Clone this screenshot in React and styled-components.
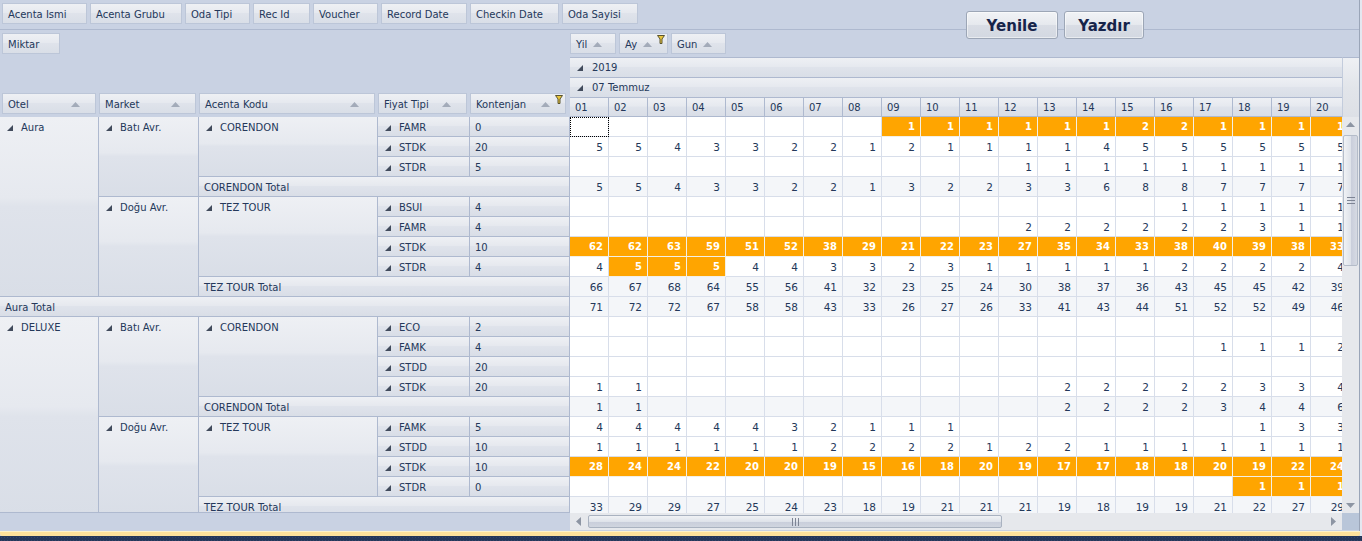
import React from 'react';
import styled, { createGlobalStyle } from 'styled-components';

const GlobalStyle = createGlobalStyle`
  html, body {
    margin: 0;
    padding: 0;
    background: #c9d2e3;
    overflow: hidden;
  }
  * {
    box-sizing: border-box;
  }
`;

const barGradient = 'linear-gradient(to bottom, #eef0f4 0%, #e6e9ef 45%, #dfe3eb 50%, #d9dee7 100%)';
const lineColor = '#aeb9cf';
const textColor = '#24385a';

const Page = styled.div`
  position: relative;
  width: 1362px;
  height: 541px;
  overflow: hidden;
  display: flex;
  flex-direction: column;
  background: #c9d2e3;
  font-family: "DejaVu Sans", "Noto Sans", sans-serif;
  font-size: 10px;
  color: ${textColor};
`;

const Frame = styled.div`
  width: 1360px;
  height: 531px;
  flex: none;
  display: flex;
  flex-direction: column;
  border-right: 1px solid #9aa5b8;
`;

const FilterBar = styled.div`
  height: 30px;
  flex: none;
  display: flex;
  gap: 3px;
  padding: 3px 0 0 2px;
  border-bottom: 1px solid ${lineColor};
`;

const Field = styled.div`
  position: relative;
  width: ${p => p.$w}px;
  height: 21px;
  flex: none;
  display: flex;
  align-items: center;
  gap: 6px;
  padding: 1px ${p => p.$right || 5}px 0 5px;
  white-space: nowrap;
  border: 1px solid #bcc6d8;
  background: ${barGradient};
`;

const FieldGap = styled.div`
  flex: 1;
`;

const Funnel = styled.svg`
  position: absolute;
  top: 1px;
  right: 2px;
  width: 8px;
  height: 9px;
`;

const HeaderArea = styled.div`
  height: 87px;
  flex: none;
  display: flex;
`;

const LeftHeader = styled.div`
  width: 570px;
  flex: none;
  display: flex;
  flex-direction: column;
  justify-content: space-between;
  padding: 3px 0 3px 2px;
`;

const FieldRow = styled.div`
  display: flex;
  gap: 3px;
`;

const RightHeader = styled.div`
  flex: 1;
  min-width: 0;
  display: flex;
  flex-direction: column;
`;

const ColFields = styled.div`
  height: 27px;
  flex: none;
  display: flex;
  gap: 3px;
  padding-top: 3px;
`;

const Band = styled.div`
  height: 20px;
  flex: none;
  display: flex;
  align-items: center;
  gap: 9px;
  padding: 0 0 0 7px;
  border-top: 1px solid ${lineColor};
  background: ${barGradient};
`;

const Days = styled.div`
  height: 20px;
  flex: none;
  display: flex;
  overflow: hidden;
  border-top: 1px solid ${lineColor};
  border-bottom: 1px solid ${lineColor};
`;

const Day = styled.div`
  width: 39px;
  flex: none;
  display: flex;
  align-items: center;
  padding: 1px 0 0 5px;
  border-right: 1px solid ${lineColor};
  background: ${barGradient};
`;

const Corner = styled.div`
  position: absolute;
  left: 1342px;
  top: 57px;
  width: 17px;
  height: 60px;
  border-left: 1px solid #c3ccdc;
  border-top: 1px solid ${lineColor};
  background: linear-gradient(to bottom, #eef0f4 0%, #e2e5ea 50%, #dde0e6 100%);
`;

const Body = styled.div`
  height: 396px;
  flex: none;
  display: flex;
`;

const RowHeaders = styled.div`
  width: 570px;
  flex: none;
  height: 396px;
  overflow: hidden;
  border-bottom: 1px solid ${lineColor};
  display: grid;
  grid-template-columns: 99px 100px 179px 92px 100px;
  grid-auto-rows: 20px;
`;

const HeadCell = styled.div`
  grid-row: span ${p => p.$rows || 1};
  grid-column: span ${p => p.$cols || 1};
  display: flex;
  align-items: flex-start;
  gap: 8px;
  padding: 5px 0 0 ${p => p.$pad || 7}px;
  white-space: nowrap;
  border-right: 1px solid ${lineColor};
  border-bottom: 1px solid ${lineColor};
  background: ${barGradient};
`;

const DataPane = styled.div`
  width: 772px;
  flex: none;
  height: 396px;
  overflow: hidden;
  display: grid;
  grid-template-columns: repeat(20, 39px);
  grid-auto-rows: 20px;
`;

const Cell = styled.div`
  display: flex;
  align-items: center;
  justify-content: flex-end;
  padding-right: 5px;
  border-right: 1px solid #d8deea;
  border-bottom: 1px solid #d8deea;
  font-size: ${p => (p.$hot ? 10 : 10.5)}px;
  font-weight: ${p => (p.$hot ? 700 : 400)};
  color: ${p => (p.$hot ? '#ffffff' : textColor)};
  background: ${p => (p.$hot ? '#ffa500' : p.$total ? '#f4f6f9' : '#ffffff')};
  border-right-color: ${p => (p.$hot ? '#f3f0e6' : '#d8deea')};
  border-bottom-color: ${p => (p.$hot ? '#f3f0e6' : '#d8deea')};
  outline: ${p => (p.$focus ? '1px dotted #000000' : 'none')};
  outline-offset: -1px;
`;

const VScroll = styled.div`
  width: 17px;
  flex: none;
  position: relative;
  background: #e6e8ec;
`;

const VThumb = styled.div`
  position: absolute;
  top: 18px;
  left: 1px;
  width: 15px;
  height: 131px;
  display: flex;
  align-items: center;
  justify-content: center;
  border: 1px solid #b4bcc9;
  border-radius: 2px;
  background: linear-gradient(to right, #f0f2f5 0%, #dfe3ea 50%, #c9cedb 55%, #d6dae3 100%);
`;

const Bottom = styled.div`
  height: 17px;
  flex: none;
  display: flex;
`;

const BottomLeft = styled.div`
  width: 570px;
  flex: none;
`;

const HScroll = styled.div`
  width: 772px;
  flex: none;
  position: relative;
  background: #e6e8ec;
`;

const HThumb = styled.div`
  position: absolute;
  left: 18px;
  top: 2px;
  width: 414px;
  height: 13px;
  display: flex;
  align-items: center;
  justify-content: center;
  border: 1px solid #a9b2c0;
  border-radius: 2px;
  background: linear-gradient(to bottom, #f0f2f5 0%, #dfe3ea 50%, #c9cedb 55%, #d0d5df 100%);
`;

const ScrollCorner = styled.div`
  width: 17px;
  flex: none;
  background: #b9c6d9;
`;

const Arrow = styled.svg`
  position: absolute;
  ${p => p.$place};
  width: ${p => p.$w}px;
  height: ${p => p.$h}px;
`;

const Status = styled.div`
  width: 1360px;
  height: 5px;
  flex: none;
  border-top: 1px solid #fff3c9;
  border-radius: 0 0 2px 2px;
  background: #ffe29b;
`;

const Desktop = styled.div`
  flex: 1;
  background-color: #25375a;
  background-image: radial-gradient(#33466a 0.5px, transparent 0.6px);
  background-size: 3px 3px;
`;

const EdgeStrip = styled.div`
  position: absolute;
  top: 0;
  right: 0;
  width: 2px;
  height: 536px;
  background: #e4e8f0;
`;

const Actions = styled.div`
  position: absolute;
  left: 966px;
  top: 11px;
  display: flex;
  gap: 6px;
`;

const ActionButton = styled.button`
  width: ${p => p.$w}px;
  height: 28px;
  padding: 1px 0 0;
  font-family: "DejaVu Sans", Verdana, sans-serif;
  font-size: 15px;
  font-weight: 700;
  color: #16244a;
  border: 1px solid #9ca6b6;
  border-radius: 3px;
  background: linear-gradient(to bottom, #f1f3f6 0%, #e6e9ee 48%, #d9dde5 52%, #d3d8e1 100%);
  box-shadow: inset 0 0 0 1px rgba(255, 255, 255, 0.5);
`;

const Expander = () => (
  <svg width="6" height="6" viewBox="0 0 6 6" style={{ flex: 'none', marginTop: 3 }}>
    <polygon points="0,6 6,6 6,0" fill="#414b5c" />
  </svg>
);

const BandExpander = () => (
  <svg width="6" height="6" viewBox="0 0 6 6" style={{ flex: 'none' }}>
    <polygon points="0,6 6,6 6,0" fill="#414b5c" />
  </svg>
);

const SortUp = () => (
  <svg width="9" height="5" viewBox="0 0 9 5" style={{ flex: 'none' }}>
    <polygon points="4.5,0 9,5 0,5" fill="#a3abb9" />
  </svg>
);

const FilterMark = () => (
  <Funnel viewBox="0 0 8 9">
    <polygon points="0.5,0.5 7.5,0.5 5,4 5,8.5 3,8.5 3,4" fill="#e9c53c" stroke="#5a5430" strokeWidth="1" />
  </Funnel>
);

const Lines = () => (
  <svg width="8" height="7" viewBox="0 0 8 7">
    <path d="M0 .5H8M0 3.5H8M0 6.5H8" stroke="#7d8494" strokeWidth="1" />
  </svg>
);

const topFields = [
  ['Acenta Ismi', 85], ['Acenta Grubu', 92], ['Oda Tipi', 65], ['Rec Id', 57],
  ['Voucher', 65], ['Record Date', 86], ['Checkin Date', 89], ['Oda Sayisi', 76],
];

const rowFields = [
  { label: 'Otel', w: 94 }, { label: 'Market', w: 97 }, { label: 'Acenta Kodu', w: 176 },
  { label: 'Fiyat Tipi', w: 89 }, { label: 'Kontenjan', w: 96, filter: true },
];

const colFields = [
  { label: 'Yil', w: 46 }, { label: 'Ay', w: 49, filter: true }, { label: 'Gun', w: 55 },
];

const days = Array.from({ length: 20 }, (_, i) => String(i + 1).padStart(2, '0'));

const _ = null;
const rows = [
  { v: [_, _, _, _, _, _, _, _, 1, 1, 1, 1, 1, 1, 2, 2, 1, 1, 1, 1], hot: 'from8' },
  { v: [5, 5, 4, 3, 3, 2, 2, 1, 2, 1, 1, 1, 1, 4, 5, 5, 5, 5, 5, 5] },
  { v: [_, _, _, _, _, _, _, _, _, _, _, 1, 1, 1, 1, 1, 1, 1, 1, 1] },
  { v: [5, 5, 4, 3, 3, 2, 2, 1, 3, 2, 2, 3, 3, 6, 8, 8, 7, 7, 7, 7], total: true },
  { v: [_, _, _, _, _, _, _, _, _, _, _, _, _, _, _, 1, 1, 1, 1, 1] },
  { v: [_, _, _, _, _, _, _, _, _, _, _, 2, 2, 2, 2, 2, 2, 3, 1, 1] },
  { v: [62, 62, 63, 59, 51, 52, 38, 29, 21, 22, 23, 27, 35, 34, 33, 38, 40, 39, 38, 33], hot: 'all' },
  { v: [4, 5, 5, 5, 4, 4, 3, 3, 2, 3, 1, 1, 1, 1, 1, 2, 2, 2, 2, 4], hot: [1, 2, 3] },
  { v: [66, 67, 68, 64, 55, 56, 41, 32, 23, 25, 24, 30, 38, 37, 36, 43, 45, 45, 42, 39], total: true },
  { v: [71, 72, 72, 67, 58, 58, 43, 33, 26, 27, 26, 33, 41, 43, 44, 51, 52, 52, 49, 46], total: true },
  { v: [_, _, _, _, _, _, _, _, _, _, _, _, _, _, _, _, _, _, _, _] },
  { v: [_, _, _, _, _, _, _, _, _, _, _, _, _, _, _, _, 1, 1, 1, 2] },
  { v: [_, _, _, _, _, _, _, _, _, _, _, _, _, _, _, _, _, _, _, _] },
  { v: [1, 1, _, _, _, _, _, _, _, _, _, _, 2, 2, 2, 2, 2, 3, 3, 4] },
  { v: [1, 1, _, _, _, _, _, _, _, _, _, _, 2, 2, 2, 2, 3, 4, 4, 6], total: true },
  { v: [4, 4, 4, 4, 4, 3, 2, 1, 1, 1, _, _, _, _, _, _, _, 1, 3, 3] },
  { v: [1, 1, 1, 1, 1, 1, 2, 2, 2, 2, 1, 2, 2, 1, 1, 1, 1, 1, 1, 1] },
  { v: [28, 24, 24, 22, 20, 20, 19, 15, 16, 18, 20, 19, 17, 17, 18, 18, 20, 19, 22, 24], hot: 'all' },
  { v: [_, _, _, _, _, _, _, _, _, _, _, _, _, _, _, _, _, 1, 1, 1], hot: [17, 18, 19] },
  { v: [33, 29, 29, 27, 25, 24, 23, 18, 19, 21, 21, 21, 19, 18, 19, 19, 21, 22, 27, 29], total: true },
];

const isHot = (row, i) => {
  if (row.hot === 'all') return true;
  if (row.hot === 'from8') return i >= 8;
  return Array.isArray(row.hot) && row.hot.includes(i);
};

const RateRow = ({ code, quota }) => (
  <>
    <HeadCell>
      <Expander />
      {code}
    </HeadCell>
    <HeadCell $pad={5}>{quota}</HeadCell>
  </>
);

const Group = ({ label, rows: span }) => (
  <HeadCell $rows={span}>
    <Expander />
    {label}
  </HeadCell>
);

const Total = ({ label, cols }) => (
  <HeadCell $cols={cols} $pad={5}>{label}</HeadCell>
);

const FieldButton = ({ label, w, filter }) => (
  <Field $w={w}>
    {label}
    <SortUp />
    {filter && <FilterMark />}
  </Field>
);

const WideField = ({ label, w, filter }) => (
  <Field $w={w} $right={15}>
    {label}
    <FieldGap />
    <SortUp />
    {filter && <FilterMark />}
  </Field>
);

export default function App() {
  return (
    <Page>
      <GlobalStyle />
      <Frame>
        <FilterBar>
          {topFields.map(([label, w]) => (
            <Field key={label} $w={w}>{label}</Field>
          ))}
        </FilterBar>
        <HeaderArea>
          <LeftHeader>
            <Field $w={58}>Miktar</Field>
            <FieldRow>
              {rowFields.map(f => <WideField key={f.label} {...f} />)}
            </FieldRow>
          </LeftHeader>
          <RightHeader>
            <ColFields>
              {colFields.map(f => <FieldButton key={f.label} {...f} />)}
            </ColFields>
            <Band><BandExpander />2019</Band>
            <Band><BandExpander />07 Temmuz</Band>
            <Days>
              {days.map(d => <Day key={d}>{d}</Day>)}
            </Days>
          </RightHeader>
        </HeaderArea>
        <Body>
          <RowHeaders>
            <Group label="Aura" rows={9} />
            <Group label="Batı Avr." rows={4} />
            <Group label="CORENDON" rows={3} />
            <RateRow code="FAMR" quota="0" />
            <RateRow code="STDK" quota="20" />
            <RateRow code="STDR" quota="5" />
            <Total label="CORENDON Total" cols={3} />
            <Group label="Doğu Avr." rows={5} />
            <Group label="TEZ TOUR" rows={4} />
            <RateRow code="BSUI" quota="4" />
            <RateRow code="FAMR" quota="4" />
            <RateRow code="STDK" quota="10" />
            <RateRow code="STDR" quota="4" />
            <Total label="TEZ TOUR Total" cols={3} />
            <Total label="Aura Total" cols={5} />
            <Group label="DELUXE" rows={10} />
            <Group label="Batı Avr." rows={5} />
            <Group label="CORENDON" rows={4} />
            <RateRow code="ECO" quota="2" />
            <RateRow code="FAMK" quota="4" />
            <RateRow code="STDD" quota="20" />
            <RateRow code="STDK" quota="20" />
            <Total label="CORENDON Total" cols={3} />
            <Group label="Doğu Avr." rows={5} />
            <Group label="TEZ TOUR" rows={4} />
            <RateRow code="FAMK" quota="5" />
            <RateRow code="STDD" quota="10" />
            <RateRow code="STDK" quota="10" />
            <RateRow code="STDR" quota="0" />
            <Total label="TEZ TOUR Total" cols={3} />
          </RowHeaders>
          <DataPane>
            {rows.map((row, r) =>
              row.v.map((value, i) => (
                <Cell
                  key={`${r}-${i}`}
                  $hot={isHot(row, i)}
                  $total={row.total}
                  $focus={r === 0 && i === 0}
                >
                  {value}
                </Cell>
              ))
            )}
          </DataPane>
          <VScroll>
            <Arrow $place="left: 4px; top: 5px;" $w={9} $h={5} viewBox="0 0 9 5">
              <polygon points="4.5,0 9,5 0,5" fill="#8d95a3" />
            </Arrow>
            <VThumb><Lines /></VThumb>
            <Arrow $place="left: 4px; bottom: 5px;" $w={9} $h={5} viewBox="0 0 9 5">
              <polygon points="0,0 9,0 4.5,5" fill="#8d95a3" />
            </Arrow>
          </VScroll>
        </Body>
        <Bottom>
          <BottomLeft />
          <HScroll>
            <Arrow $place="left: 6px; top: 4px;" $w={5} $h={9} viewBox="0 0 5 9">
              <polygon points="5,0 5,9 0,4.5" fill="#8d95a3" />
            </Arrow>
            <HThumb>
              <svg width="7" height="8" viewBox="0 0 7 8">
                <path d="M.5 0V8M3.5 0V8M6.5 0V8" stroke="#7d8494" strokeWidth="1" />
              </svg>
            </HThumb>
            <Arrow $place="right: 6px; top: 4px;" $w={5} $h={9} viewBox="0 0 5 9">
              <polygon points="0,0 0,9 5,4.5" fill="#8d95a3" />
            </Arrow>
          </HScroll>
          <ScrollCorner />
        </Bottom>
      </Frame>
      <Status />
      <Desktop />
      <Corner />
      <EdgeStrip />
      <Actions>
        <ActionButton $w={92}>Yenile</ActionButton>
        <ActionButton $w={80}>Yazdır</ActionButton>
      </Actions>
    </Page>
  );
}
